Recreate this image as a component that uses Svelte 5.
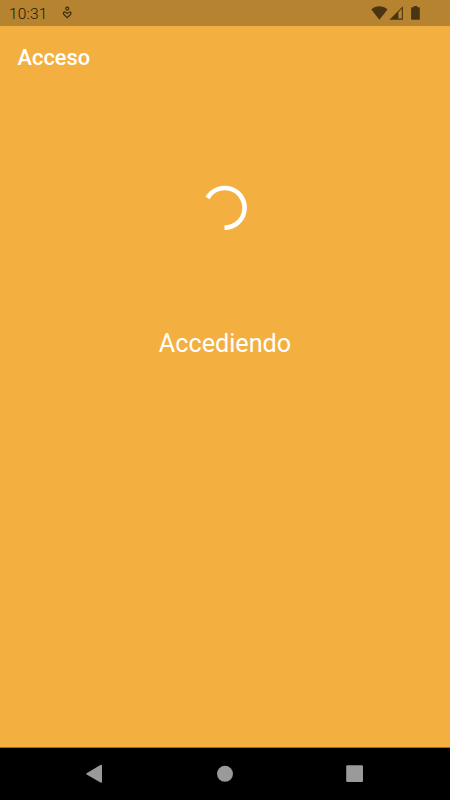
<script>
	export let hora = '10:31';
	export let titulo = 'Acceso';
	export let mensaje = 'Accediendo';
</script>

<div class="screen">
	<div class="status-bar">
		<span class="clock">{hora}</span>
		<svg class="notification" width="10" height="14" viewBox="0 0 10 14" aria-hidden="true">
			<circle cx="5.2" cy="2.6" r="1.5" />
			<path d="M5.2 11.6 1.9 8.5C.7 7.1 1.8 5.7 3.2 6c.8.1 1.3.8 2 1.5C5.9 6.8 6.4 6.1 7.2 6c1.4-.3 2.5 1.1 1.3 2.5Z" />
		</svg>
		<div class="indicators">
			<svg width="17" height="14" viewBox="0 0 17 14" aria-hidden="true">
				<path d="M8.4 13.7.3 3.4C5-.7 11.8-.7 16.5 3.4Z" />
			</svg>
			<svg width="14" height="14" viewBox="0 0 14 14" aria-hidden="true">
				<path fill-rule="evenodd" d="M.4 13.8 13.9.2V13.8ZM9.4 6.2V12.6H12.8V2.8Z" />
			</svg>
			<svg class="battery" width="9" height="14" viewBox="0 0 9 14" aria-hidden="true">
				<path d="M2.7 0H6.2V1.3H8Q8.8 1.3 8.8 2.1V13Q8.8 13.8 8 13.8H.9Q.1 13.8.1 13V2.1Q.1 1.3.9 1.3H2.7Z" />
			</svg>
		</div>
	</div>

	<header>
		<h1>{titulo}</h1>
	</header>

	<main>
		<svg class="spinner" width="48" height="48" viewBox="0 0 48 48" aria-hidden="true">
			<path d="M6.6 14A19.8 19.8 0 1 1 23.5 43.6" />
		</svg>
		<p>{mensaje}</p>
	</main>

	<nav>
		<svg width="18" height="20" viewBox="0 0 18 20" aria-hidden="true">
			<path d="M.6 9.2 14.4.9Q16 .2 16 1.8V17.8Q16 19.4 14.4 18.6L.6 10.4Q-.2 9.8.6 9.2Z" />
		</svg>
		<svg width="18" height="18" viewBox="0 0 18 18" aria-hidden="true">
			<circle cx="9" cy="8.8" r="8" />
		</svg>
		<svg width="18" height="18" viewBox="0 0 18 18" aria-hidden="true">
			<rect x=".2" y=".3" width="16.8" height="16.8" rx="1" />
		</svg>
	</nav>
</div>

<style>
	:global(body) {
		margin: 0;
	}

	.screen {
		display: flex;
		flex-direction: column;
		height: 100vh;
		background: #f3b041;
		color: #fff;
		font-family: Roboto, sans-serif;
	}

	svg {
		display: block;
		flex: none;
	}

	.status-bar {
		display: flex;
		align-items: center;
		box-sizing: border-box;
		height: 26px;
		padding: 0 30px 0 9px;
		background: #b68430;
		color: #1c1406;
	}

	.clock {
		width: 53px;
		padding-top: 2px;
		font-size: 15.5px;
		font-weight: 300;
		line-height: 24px;
		letter-spacing: 0.2px;
	}

	.notification {
		fill: none;
		stroke: #382a10;
		stroke-width: 1.2;
	}

	.indicators {
		display: flex;
		gap: 1px;
		margin-left: auto;
		fill: #493513;
	}

	.battery {
		margin-left: 7px;
	}

	header {
		display: flex;
		align-items: center;
		height: 63px;
		padding: 0 17.6px;
	}

	h1 {
		margin: 0;
		font-size: 21.8px;
		font-weight: 500;
		line-height: 26px;
	}

	main {
		display: flex;
		flex: 1;
		flex-direction: column;
		align-items: center;
		padding-top: 95px;
	}

	.spinner {
		fill: none;
		stroke: #fff;
		stroke-width: 4.6;
	}

	p {
		margin: 96px 0 0;
		font-size: 25.2px;
		line-height: 32px;
	}

	nav {
		display: flex;
		align-items: center;
		justify-content: space-between;
		box-sizing: border-box;
		height: 53px;
		padding: 0 86px;
		border-top: 1px solid #9f6f20;
		background: #000;
		fill: #9a9a9a;
	}
</style>
